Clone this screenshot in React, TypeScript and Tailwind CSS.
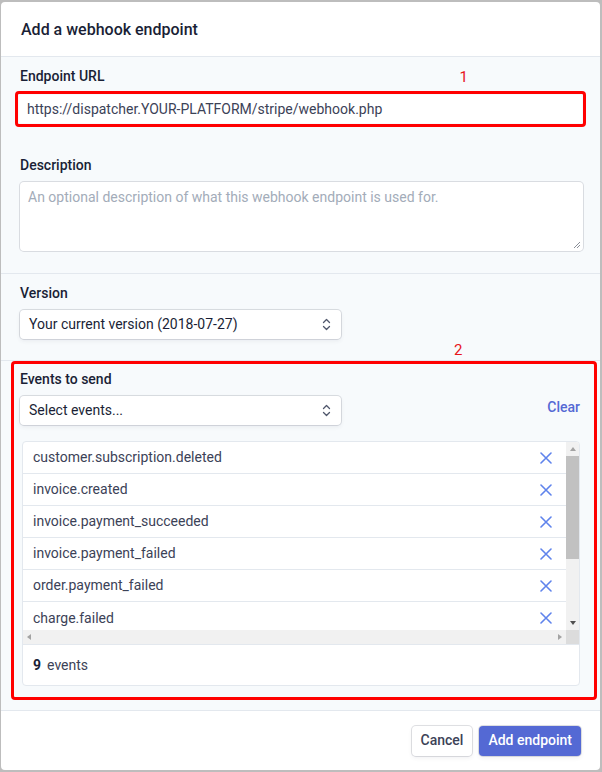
import React from 'react'

const events = [
  'customer.subscription.deleted',
  'invoice.created',
  'invoice.payment_succeeded',
  'invoice.payment_failed',
  'order.payment_failed',
  'charge.failed',
]

function UpDown() {
  return (
    <svg width="9" height="13" viewBox="0 0 9 13" fill="none" stroke="#4f566b" strokeWidth="1.3" strokeLinecap="round" strokeLinejoin="round">
      <path d="M1.5 4.5 L4.5 1.5 L7.5 4.5" />
      <path d="M1.5 8.5 L4.5 11.5 L7.5 8.5" />
    </svg>
  )
}

function Cross() {
  return (
    <svg width="12" height="12" viewBox="0 0 12 12" stroke="#5f83ec" strokeWidth="1.6" strokeLinecap="round">
      <path d="M1 1 L11 11 M11 1 L1 11" />
    </svg>
  )
}

function SelectBox({ label }: { label: string }) {
  return (
    <div className="w-[321px] h-[29px] bg-white rounded-[4px] shadow-[0_0_0_1px_rgba(60,66,87,0.16),0_2px_4px_rgba(60,66,87,0.08)] flex items-center justify-between pl-[9px] pr-[10px] text-[14px] text-[#1a1f36]">
      <span>{label}</span>
      <UpDown />
    </div>
  )
}

export default function App() {
  return (
    <div className="w-[602px] h-[772px] bg-[#bdbdbd] pt-[2px] pb-[2px] pl-[1px] pr-[2px] font-['Roboto',sans-serif]">
      <div className="h-full bg-white rounded-[4px] overflow-hidden flex flex-col">
        {/* header */}
        <div className="h-[55px] shrink-0 flex items-center px-[20px] pt-[2px] border-b border-[#e3e8ee] text-[16px] font-medium text-[#1a1f36]">
          Add a webhook endpoint
        </div>

        {/* url + description */}
        <div className="bg-[#f7fafc] px-[19px] pt-[10px] pb-[22px] border-b border-[#e3e8ee]">
          <div className="flex items-end justify-between h-[20px]">
            <span className="text-[14px] font-medium text-[#1a1f36]">Endpoint URL</span>
            <span className="text-[15px] leading-none text-[#e8141b] mr-[113px] mb-[2px]">1</span>
          </div>
          <div className="mt-[4px] -mx-[5px] border-[3px] border-[#ff0000] rounded-[4px] p-[1px]">
            <div className="h-[28px] bg-white rounded-[3px] flex items-center px-[8px] text-[14px] text-[#3c4257]">
              https://dispatcher.YOUR-PLATFORM/stripe/webhook.php
            </div>
          </div>
          <div className="mt-[28px] text-[14px] leading-[20px] font-medium text-[#1a1f36]">Description</div>
          <div className="relative mt-[7px] h-[69px] bg-white rounded-[4px] shadow-[0_0_0_1px_rgba(60,66,87,0.16)] px-[8px] pt-[5px] text-[14px] text-[#a3acb9] mr-[-2px]">
            An optional description of what this webhook endpoint is used for.
            <svg className="absolute right-[2px] bottom-[2px]" width="8" height="8" viewBox="0 0 8 8" stroke="#8a8f98" strokeWidth="1">
              <path d="M7 1 L1 7 M7 4 L4 7" />
            </svg>
          </div>
        </div>

        {/* version */}
        <div className="bg-[#f7fafc] px-[19px] pt-[9px] border-b border-[#e3e8ee] h-[88px]">
          <div className="text-[14px] leading-[20px] font-medium text-[#1a1f36]">Version</div>
          <div className="mt-[7px]">
            <SelectBox label="Your current version (2018-07-27)" />
          </div>
          <div className="relative">
            <span className="absolute left-[434px] top-[4px] text-[15px] leading-none text-[#e8141b]">2</span>
          </div>
        </div>

        {/* events */}
        <div className="bg-[#f7fafc] pl-[10px] pr-[3px] pb-[10px] flex-1">
          <div className="border-[3px] border-[#ff0000] rounded-[4px] pl-[6px] pr-[14px] pt-[5px] pb-[11px]">
            <div className="text-[14px] leading-[20px] font-medium text-[#1a1f36]">Events to send</div>
            <div className="mt-[7px] flex items-center justify-between">
              <SelectBox label="Select events..." />
              <span className="text-[14px] font-medium text-[#5469d4] mb-[6px]">Clear</span>
            </div>
            <div className="mt-[16px] ml-[2px] bg-white border border-[#e3e8ee] rounded-[4px] overflow-hidden">
              <div className="flex h-[188px]">
                <div className="flex-1 overflow-hidden">
                  {events.map((e, i) => (
                    <div key={e} className={`h-[32px] shrink-0 flex items-center justify-between pl-[10px] pr-[14px] text-[14px] text-[#3c4257] ${i < events.length - 1 ? 'border-b border-[#e3e8ee]' : ''}`}>
                      <span>{e}</span>
                      <Cross />
                    </div>
                  ))}
                </div>
                {/* vertical scrollbar */}
                <div className="w-[13px] bg-[#f1f1f1] flex flex-col items-center">
                  <div className="h-[14px] flex items-center justify-center">
                    <div className="w-0 h-0 border-l-[3.5px] border-r-[3.5px] border-b-[4px] border-l-transparent border-r-transparent border-b-[#a3a3a3]" />
                  </div>
                  <div className="w-[13px] h-[103px] bg-[#c1c1c1]" />
                  <div className="flex-1" />
                  <div className="h-[14px] flex items-center justify-center">
                    <div className="w-0 h-0 border-l-[3.5px] border-r-[3.5px] border-t-[4px] border-l-transparent border-r-transparent border-t-[#505050]" />
                  </div>
                </div>
              </div>
              {/* horizontal scrollbar */}
              <div className="flex h-[15px] border-b border-[#e3e8ee]">
                <div className="flex-1 bg-[#f1f1f1] flex items-center justify-between px-[4px]">
                  <div className="w-0 h-0 border-t-[3.5px] border-b-[3.5px] border-r-[4px] border-t-transparent border-b-transparent border-r-[#a3a3a3]" />
                  <div className="w-0 h-0 border-t-[3.5px] border-b-[3.5px] border-l-[4px] border-t-transparent border-b-transparent border-l-[#a3a3a3]" />
                </div>
                <div className="w-[13px] bg-[#dcdcdc]" />
              </div>
              <div className="h-[40px] flex items-center pl-[10px] text-[14px] text-[#3c4257]">
                <span className="font-bold text-[#1a1f36]">9</span>
                <span className="ml-[6px]">events</span>
              </div>
            </div>
          </div>
        </div>

        {/* footer */}
        <div className="h-[60px] shrink-0 border-t border-[#e3e8ee] flex items-center justify-end gap-[7px] pr-[19px]">
          <button className="h-[30px] px-[9px] bg-white rounded-[4px] shadow-[0_0_0_1px_rgba(60,66,87,0.16),0_2px_4px_rgba(60,66,87,0.08)] text-[14px] font-medium text-[#3c4257]">
            Cancel
          </button>
          <button className="h-[30px] px-[9px] bg-[#5469d4] rounded-[4px] shadow-[0_0_0_1px_rgba(60,66,87,0.16),0_2px_4px_rgba(60,66,87,0.08)] text-[14px] font-medium text-white">
            Add endpoint
          </button>
        </div>
      </div>
    </div>
  )
}
